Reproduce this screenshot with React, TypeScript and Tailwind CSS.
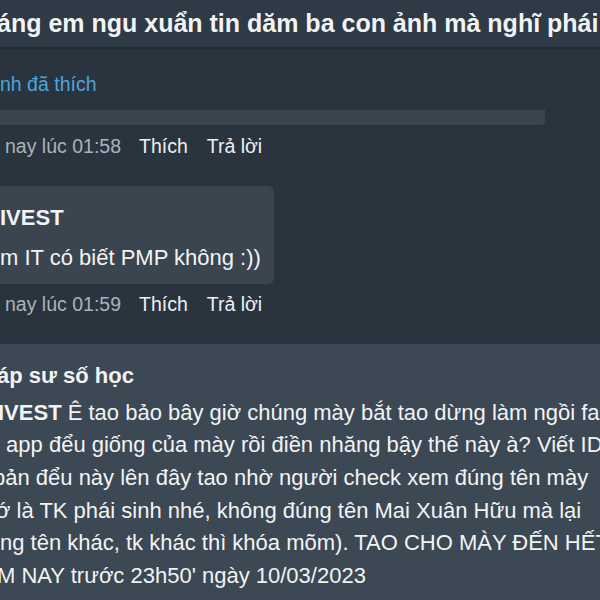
const lines = [
  { lead: 'IVEST', rest: ' Ê tao bảo bây giờ chúng mày bắt tao dừng làm ngồi fa', shift: '-ml-[2px]' },
  { lead: '', rest: ' app đểu giống của mày rồi điền nhăng bậy thế này à? Viết ID', shift: 'ml-0' },
  { lead: '', rest: 'bản đểu này lên đây tao nhờ người check xem đúng tên mày', shift: '-ml-[7px]' },
  { lead: '', rest: 'ớ là TK phái sinh nhé, không đúng tên Mai Xuân Hữu mà lại', shift: '-ml-[4px]' },
  { lead: '', rest: 'ng tên khác, tk khác thì khóa mõm). TAO CHO MÀY ĐẾN HẾT', shift: 'ml-0' },
  { lead: '', rest: 'M NAY trước 23h50\' ngày 10/03/2023', shift: '-ml-[3px]' },
]

function Meta({ time }: { time: string }) {
  return (
    <div className="flex items-center h-[28px] text-[19.5px] pl-[5px]">
      <span className="text-[#aab3bc]">nay lúc {time}</span>
      <span className="ml-[18px] text-[#eef0f2]">Thích</span>
      <span className="ml-[19px] text-[#eef0f2]">Trả lời</span>
    </div>
  )
}

export default function App() {
  return (
    <div
      className="w-[600px] h-[600px] overflow-hidden bg-[#29343f] text-[#f2f3f5]"
      style={{ fontFamily: '"Liberation Sans", Arial, sans-serif' }}
    >
      {/* post title */}
      <div className="h-[47px] bg-[#2e3a46] flex items-center overflow-hidden whitespace-nowrap">
        <span className="-ml-[3px] text-[25px] font-bold leading-none">
          áng em ngu xuẩn tin dăm ba con ảnh mà nghĩ phái sinh
        </span>
      </div>
      <div className="h-[2px] bg-[#232c35]" />

      {/* comments */}
      <div className="h-[295px] pt-[22px]">
        <div className="h-[28px] flex items-center text-[19.5px] text-[#4ea5db] whitespace-nowrap">
          nh đã thích
        </div>
        <div className="mt-[11px] h-[15px] w-[545px] bg-[#3a4550] rounded-br-[4px]" />
        <div className="mt-[8px]">
          <Meta time="01:58" />
        </div>

        <div className="mt-[25px] w-[274px] h-[98px] bg-[#3a4550] rounded-r-[6px] pt-[17px] whitespace-nowrap">
          <div className="h-[28px] flex items-center text-[22px] font-bold">IVEST</div>
          <div className="mt-[12px] h-[28px] flex items-center text-[22px]">m IT có biết PMP không :))</div>
        </div>
        <div className="mt-[7px]">
          <Meta time="01:59" />
        </div>
      </div>

      {/* reply */}
      <div className="h-[256px] bg-[#3c4853] pt-[15px] overflow-hidden whitespace-nowrap text-[22px]">
        <div className="h-[33px] flex items-center font-bold -ml-[3px]">áp sư số học</div>
        <div className="mt-[4px]">
          {lines.map((l, i) => (
            <div key={i} className={`h-[32.6px] flex items-center ${l.shift}`}>
              {l.lead && <span className="font-bold">{l.lead}</span>}
              <span className="whitespace-pre">{l.rest}</span>
            </div>
          ))}
        </div>
      </div>
    </div>
  )
}
